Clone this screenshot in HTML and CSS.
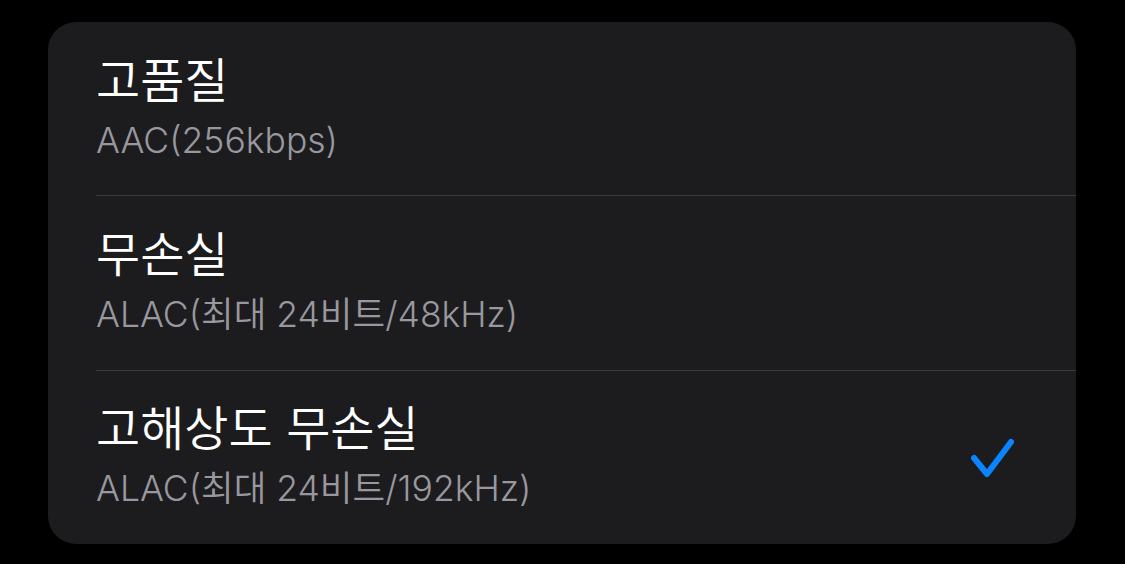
FILE: index.html
```html
<!DOCTYPE html>
<html lang="ko">
<head>
    <meta charset="UTF-8">
    <meta name="viewport" content="width=device-width, initial-scale=1.0">
    <title>오디오 품질</title>
    <link rel="stylesheet" href="styles.css">
</head>
<body>
    <div class="card">
        <div class="row">
            <div class="label">
                <div class="title">고품질</div>
                <div class="sub">AAC(256kbps)</div>
            </div>
        </div>
        <div class="row">
            <div class="label">
                <div class="title">무손실</div>
                <div class="sub">ALAC(최대 24비트/48kHz)</div>
            </div>
        </div>
        <div class="row last">
            <div class="label">
                <div class="title">고해상도 무손실</div>
                <div class="sub">ALAC(최대 24비트/192kHz)</div>
            </div>
            <svg class="check" width="50" height="48" viewBox="0 0 50 48">
                <path d="M6 23 L19 39 L43 7" fill="none" stroke="#0a84ff" stroke-width="6" stroke-linecap="round" stroke-linejoin="round"/>
            </svg>
        </div>
    </div>
</body>
</html>
```

FILE: styles.css
```css
body {
    margin: 0;
    background: #000;
    font-family: Inter, "Noto Sans CJK KR", sans-serif;
    color: #fff;
}

.card {
    width: 1028px;
    height: 522px;
    margin: 22px 0 0 48px;
    background: #1c1c1e;
    border-radius: 28px;
    overflow: hidden;
    display: flex;
    flex-direction: column;
}

.row {
    flex: 1;
    margin-left: 48px;
    padding-right: 58px;
    border-bottom: 1px solid #3a3a3c;
    display: flex;
    align-items: center;
    justify-content: space-between;
}

.row.last {
    border-bottom: none;
}

.title {
    font-size: 48px;
    font-weight: 350;
    line-height: 64px;
}

.sub {
    font-size: 35.5px;
    font-weight: 350;
    line-height: 56px;
    color: #98989e;
}

.check {
    margin-top: 4px;
}
```
